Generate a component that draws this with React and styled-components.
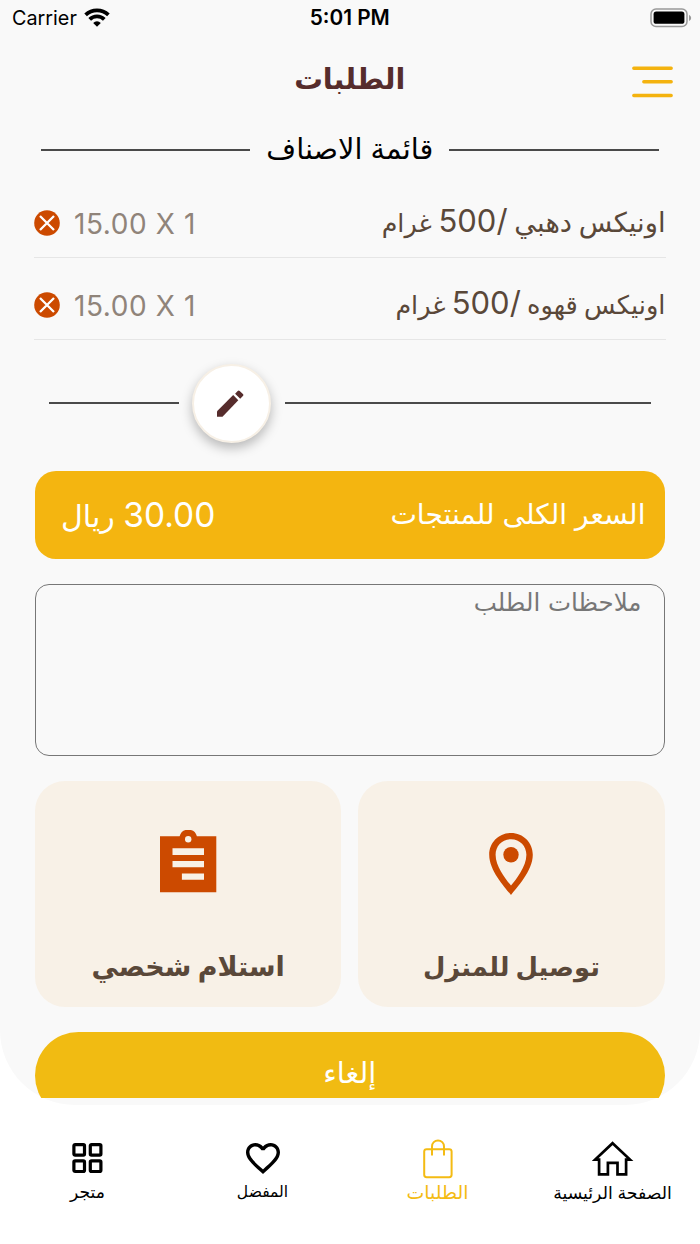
import React from "react";
import styled, { createGlobalStyle } from "styled-components";

const items = [
  { id: 1, name: "اونيكس دهبي", weight: "500", price: "15.00 X 1" },
  { id: 2, name: "اونيكس قهوه", weight: "500", price: "15.00 X 1", nameSize: 25.7 },
];

const WifiIcon = () => (
  <svg width="26" height="19" viewBox="0 0 26 19">
    <g fill="none" stroke="#000" strokeWidth="3.8">
      <path d="M1.6 6.9a16.6 16.6 0 0 1 22.8 0" />
      <path d="M5.7 11.4a10.4 10.4 0 0 1 14.6 0" />
    </g>
    <path d="M13 18.7 9.2 14.9a5.4 5.4 0 0 1 7.6 0z" />
  </svg>
);

const BatteryIcon = () => (
  <svg width="42" height="20" viewBox="0 0 42 20">
    <rect x="1" y="1" width="36" height="17.4" rx="5" fill="none" stroke="#999" strokeWidth="1.5" />
    <rect x="3.6" y="3.6" width="30.8" height="12.2" rx="2.6" />
    <path d="M39 6.7q2.2 1.2 2.2 3.2t-2.2 3.2z" fill="#999" />
  </svg>
);

const MenuIcon = () => (
  <svg width="41" height="32" viewBox="0 0 41 32" stroke="#f4b30f" strokeWidth="3.4" strokeLinecap="round">
    <path d="M1.8 2.2h37.4M11.8 15.8h27.4M1.8 29.5h37.4" />
  </svg>
);

const RemoveIcon = () => (
  <svg width="26" height="26" viewBox="0 0 26 26">
    <circle cx="13" cy="13" r="12.8" fill="#cc4a00" />
    <path d="m6 6 14 14M20 6 6 20" stroke="#fff" strokeWidth="2.3" />
  </svg>
);

const PencilIcon = () => (
  <svg width="27" height="27" viewBox="0 0 27 27" fill="#562c2c">
    <path d="M0 21.2 16.2 5.1l5.1 5.1L5.5 26.7H0z" />
    <path d="m18.1 3.7 2.6-2.8q1-1 2 0l3.2 3.2q1 1 0 2l-2.7 2.7z" />
  </svg>
);

const PinIcon = () => (
  <svg width="44" height="62" viewBox="0 0 44 62">
    <path
      fill="#cc4a00"
      fillRule="evenodd"
      d="M22 0C34.2 0 43.8 9.6 43.8 21.7 43.8 38 27 55.5 22 62 17 55.5.2 38 .2 21.7.2 9.6 9.8 0 22 0zm0 6.2c-9 0-15.4 7-15.4 15.5C6.6 33.5 17 46.5 22 52.6c5-6.1 15.4-19.1 15.4-30.9C37.4 13.2 31 6.2 22 6.2z"
    />
    <circle cx="22" cy="21.7" r="7.7" fill="#cc4a00" />
  </svg>
);

const ClipboardIcon = () => (
  <svg width="57" height="63" viewBox="0 0 57 63">
    <path fill="#cc4a00" d="M0 6.2h19.6a9 9 0 0 1 17.3 0h19.4v56H0z" />
    <circle cx="28.2" cy="9.3" r="3.2" fill="#f8f1e7" />
    <path fill="#f8f1e7" d="M12.5 18.3H44v6.6H12.5zM12.5 31H44v6.2H12.5zM21.9 43.4H44v6.3H21.9z" />
  </svg>
);

const GridIcon = () => (
  <svg width="31" height="31" viewBox="0 0 31 31" fill="none" stroke="#000" strokeWidth="3.2">
    <rect x="1.9" y="1.6" width="10.6" height="10.6" rx="1.2" />
    <rect x="18.3" y="1.6" width="10.6" height="10.6" rx="1.2" />
    <rect x="1.9" y="17.9" width="10.6" height="10.6" rx="1.2" />
    <rect x="18.3" y="17.9" width="10.6" height="10.6" rx="1.2" />
  </svg>
);

const HeartIcon = () => (
  <svg width="34" height="31" viewBox="2 3 20 18.35" preserveAspectRatio="none">
    <path d="M16.5 3c-1.74 0-3.41.81-4.5 2.09C10.91 3.81 9.24 3 7.5 3 4.42 3 2 5.42 2 8.5c0 3.78 3.4 6.86 8.55 11.54L12 21.35l1.45-1.32C18.6 15.36 22 12.28 22 8.5 22 5.42 19.58 3 16.5 3zm-4.4 15.55-.1.1-.1-.1C7.14 14.24 4 11.39 4 8.5 4 6.5 5.5 5 7.5 5c1.54 0 3.04.99 3.57 2.36h1.87C13.46 5.99 14.96 5 16.5 5c2 0 3.5 1.5 3.5 3.5 0 2.89-3.14 5.74-7.9 10.05z" />
  </svg>
);

const BagIcon = () => (
  <svg width="30" height="40" viewBox="0 0 30 40" fill="none" stroke="#f4bb13" strokeWidth="2">
    <rect x="1.2" y="10.2" width="27.4" height="28" rx="2.4" />
    <path d="M9 16.5V7.4a6 6 0 0 1 12 0v9.1" />
  </svg>
);

const HomeIcon = () => (
  <svg width="42" height="35" viewBox="0 0 42 35" fill="none" stroke="#000" strokeWidth="2.7">
    <path d="M20.6 2.2 38 18.6h-3.9v14.8h-8.6V21.9h-9.6v11.5H7.1V18.6H3.2z" />
  </svg>
);

const tabs = [
  { label: "الصفحة الرئيسية", size: 17.3, icon: <HomeIcon />, drop: 1 },
  { label: "الطلبات", size: 18.9, icon: <BagIcon />, active: true, drop: 1 },
  { label: "المفضل", size: 15.6, icon: <HeartIcon /> },
  { label: "متجر", size: 17.2, icon: <GridIcon /> },
];

const App = () => (
  <Screen dir="rtl">
    <GlobalStyle />
    <Panel>
      <StatusBar>
        <Carrier>
          Carrier <WifiIcon />
        </Carrier>
        <Clock>5:01 PM</Clock>
        <BatteryIcon />
      </StatusBar>
      <Header>
        <Burger aria-label="menu">
          <MenuIcon />
        </Burger>
        <Title>الطلبات</Title>
      </Header>
      <SectionTitle>
        <Line />
        <SectionText>قائمة الاصناف</SectionText>
        <Line />
      </SectionTitle>
      <Items>
        {items.map((item) => (
          <Item key={item.id}>
            <ItemName $size={item.nameSize}>
              {item.name} <Weight>/{item.weight}</Weight> <Unit>غرام</Unit>
            </ItemName>
            <ItemPrice>
              <RemoveIcon />
              <Price>{item.price}</Price>
            </ItemPrice>
          </Item>
        ))}
      </Items>
      <EditRow>
        <Line />
        <EditButton aria-label="edit">
          <PencilIcon />
        </EditButton>
        <ShortLine />
      </EditRow>
      <TotalBar>
        <TotalLabel>السعر الكلى للمنتجات</TotalLabel>
        <TotalPrice>
          <Amount>30.00</Amount> ريال
        </TotalPrice>
      </TotalBar>
      <Notes placeholder="ملاحظات الطلب" />
      <Methods>
        <Method>
          <MethodIcon $top={3}>
            <PinIcon />
          </MethodIcon>
          <MethodText $size={25.8}>توصيل للمنزل</MethodText>
        </Method>
        <Method>
          <MethodIcon>
            <ClipboardIcon />
          </MethodIcon>
          <MethodText $size={27}>استلام شخصي</MethodText>
        </Method>
      </Methods>
      <CancelClip>
        <CancelButton>إلغاء</CancelButton>
      </CancelClip>
    </Panel>
    <TabBar>
      {tabs.map((tab) => (
        <Tab key={tab.label} $active={tab.active}>
          <TabIcon>{tab.icon}</TabIcon>
          <TabLabel $size={tab.size} $drop={tab.drop}>
            {tab.label}
          </TabLabel>
        </Tab>
      ))}
    </TabBar>
  </Screen>
);

const GlobalStyle = createGlobalStyle`
  * {
    box-sizing: border-box;
  }
  body {
    margin: 0;
    background: #fff;
    font-family: Inter, "DejaVu Sans", sans-serif;
  }
  svg {
    display: block;
    flex-shrink: 0;
  }
  button {
    border: none;
    padding: 0;
    font-family: inherit;
  }
`;

const Screen = styled.div`
  display: flex;
  flex-direction: column;
  width: 700px;
  height: 1244px;
  overflow: hidden;
`;

const Panel = styled.main`
  display: flex;
  flex-direction: column;
  flex-shrink: 0;
  height: 1105px;
  padding: 0 35.5px 0 35px;
  background: #f9f9f9;
  border-radius: 0 0 75px 75px;
`;

const StatusBar = styled.div`
  display: grid;
  grid-template-columns: 1fr auto 1fr;
  align-items: center;
  direction: ltr;
  height: 35px;
  margin: 0 -23px;
  color: #000;
  > svg {
    justify-self: end;
    margin-right: -4px;
  }
`;

const Carrier = styled.div`
  display: flex;
  align-items: center;
  gap: 7px;
  font-size: 19.8px;
  > svg {
    margin-top: -1px;
  }
`;

const Clock = styled.div`
  font-size: 20.8px;
  font-weight: 600;
`;

const Header = styled.header`
  display: grid;
  grid-template-columns: 1fr auto 1fr;
  align-items: center;
  height: 92px;
  margin: 0 -8px;
`;

const Burger = styled.button`
  justify-self: start;
  padding-top: 1px;
  background: none;
`;

const Title = styled.h1`
  margin: 0;
  padding-bottom: 4px;
  font-size: 28.6px;
  line-height: 40px;
  color: #562c2c;
`;

const SectionTitle = styled.div`
  display: flex;
  align-items: center;
  gap: 16px;
  height: 46px;
  margin: 0 6px;
`;

const Line = styled.div`
  flex: 1;
  height: 2px;
  background: #4a4a4a;
`;

const ShortLine = styled(Line)`
  flex: 0 0 130px;
`;

const SectionText = styled.h2`
  margin: 0;
  padding-bottom: 3px;
  font-size: 28.8px;
  font-weight: 400;
  line-height: 40px;
`;

const Items = styled.div`
  margin: 3px -1px 0;
`;

const Item = styled.div`
  display: flex;
  align-items: center;
  justify-content: space-between;
  height: 82px;
  padding-top: 11px;
  border-bottom: 1px solid #e6e6e6;
`;

const ItemName = styled.div`
  font-size: ${(p) => p.$size || 27.4}px;
  line-height: 40px;
  word-spacing: -1px;
  white-space: nowrap;
  color: #5a4839;
`;

const Weight = styled.span`
  font-size: 31px;
`;

const Unit = styled.span`
  font-size: 25.4px;
`;

const ItemPrice = styled.div`
  display: flex;
  align-items: center;
  gap: 14px;
  padding-top: 2px;
  direction: ltr;
`;

const Price = styled.div`
  padding-top: 2px;
  font-size: 28px;
  line-height: 34px;
  letter-spacing: 0.6px;
  color: #90847a;
`;

const EditRow = styled.div`
  display: flex;
  align-items: center;
  gap: 13.5px;
  height: 126px;
  margin: 0 14px 0 13.5px;
`;

const EditButton = styled.button`
  display: flex;
  align-items: center;
  justify-content: center;
  width: 79px;
  height: 79px;
  padding: 0 2px 0 0;
  border: 2px solid #f7f0e6;
  border-radius: 50%;
  background: #fff;
  box-shadow: 0 5px 12px rgba(0, 0, 0, 0.27);
`;

const TotalBar = styled.div`
  display: flex;
  align-items: center;
  justify-content: space-between;
  height: 88px;
  margin-top: 5px;
  padding: 0 19px 2px 26px;
  border-radius: 21px;
  background: #f4b510;
  color: #fff;
`;

const TotalLabel = styled.div`
  font-size: 28.1px;
  line-height: 40px;
`;

const TotalPrice = styled.div`
  padding-top: 2px;
  font-size: 30px;
  line-height: 40px;
`;

const Amount = styled.span`
  font-size: 33.5px;
  letter-spacing: 1.4px;
`;

const Notes = styled.textarea`
  display: block;
  width: 100%;
  height: 172px;
  margin-top: 25px;
  padding: 0 22px;
  border: 1.5px solid #777;
  border-radius: 14px;
  outline: none;
  resize: none;
  background: transparent;
  font-family: "DejaVu Sans", sans-serif;
  font-size: 24.5px;
  line-height: 36px;
  &::placeholder {
    color: #777;
    opacity: 1;
  }
`;

const Methods = styled.div`
  display: grid;
  grid-template-columns: 1fr 1fr;
  gap: 17px;
  margin-top: 25px;
`;

const Method = styled.div`
  display: flex;
  flex-direction: column;
  align-items: center;
  height: 226px;
  padding-top: 49px;
  border-radius: 30px;
  background: #f8f1e7;
`;

const MethodIcon = styled.div`
  height: 67px;
  padding-top: ${(p) => p.$top || 0}px;
`;

const MethodText = styled.div`
  margin-top: 50px;
  font-size: ${(p) => p.$size}px;
  font-weight: 700;
  line-height: 40px;
  color: #5a4839;
`;

const CancelClip = styled.div`
  height: 66px;
  margin-top: 25.4px;
  overflow: hidden;
`;

const CancelButton = styled.button`
  display: block;
  width: 100%;
  height: 87px;
  padding-bottom: 5px;
  border-radius: 44px;
  background: #f1bb12;
  font-size: 28.8px;
  line-height: 40px;
  color: #fff;
`;

const TabBar = styled.nav`
  display: grid;
  grid-template-columns: repeat(4, 1fr);
  flex: 1;
  padding-top: 32px;
`;

const Tab = styled.div`
  display: flex;
  flex-direction: column;
  align-items: center;
  color: ${(p) => (p.$active ? "#f4bb13" : "#000")};
`;

const TabIcon = styled.div`
  display: flex;
  align-items: center;
  height: 43px;
`;

const TabLabel = styled.div`
  margin-top: ${(p) => p.$drop || 0}px;
  font-size: ${(p) => p.$size}px;
  line-height: 24px;
  white-space: nowrap;
`;

export default App;
